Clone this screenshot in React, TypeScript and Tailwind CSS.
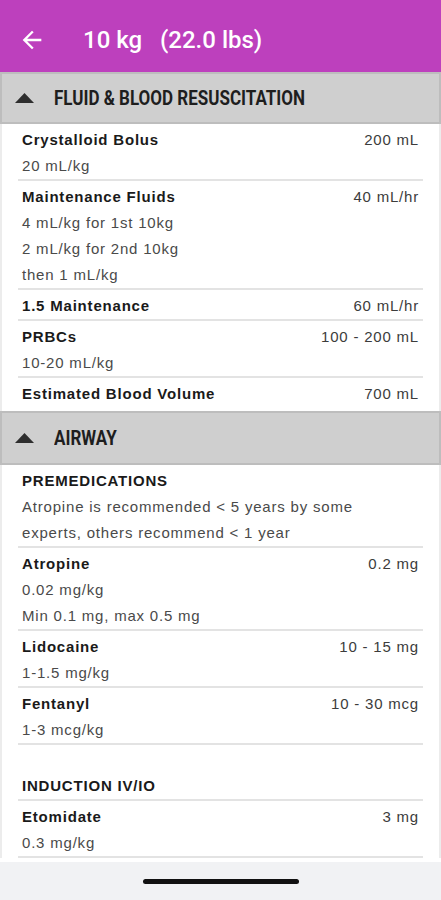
import React from "react";

type Row = { title: string; value?: string; lines?: string[] };

function Section({ title, tall }: { title: string; tall?: boolean }) {
  return (
    <div
      className={`flex ${tall ? "h-[54px]" : "h-[52px]"} items-center border-y-2 border-x-2 border-[#bdbdbd] bg-[#cfcfcf]`}
    >
      <svg width="19" height="10" viewBox="0 0 19 10" className="ml-[13px] shrink-0">
        <polygon points="9.5,0 19,10 0,10" fill="#2e2e2e" />
      </svg>
      <span
        className="ml-[20px] inline-block origin-left scale-x-[0.85] whitespace-nowrap text-[20px] font-bold text-[#1e1e1e]"
        style={{ fontFamily: "Roboto, 'Liberation Sans', sans-serif" }}
      >
        {title}
      </span>
    </div>
  );
}

function Item({ row, last }: { row: Row; last?: boolean }) {
  return (
    <div className={`px-[4px] pt-[3px] ${last ? "pb-[4px]" : "border-b-2 border-[#e3e3e3]"}`}>
      <div className="flex items-center justify-between leading-[26px]">
        <span className="font-bold text-[#1a1a1a]">{row.title}</span>
        {row.value && <span className="text-[#3c3c3c]">{row.value}</span>}
      </div>
      {row.lines?.map((l, i) => (
        <div key={i} className="leading-[26px] text-[#4a4a4a]">
          {l}
        </div>
      ))}
    </div>
  );
}

const fluid: Row[] = [
  { title: "Crystalloid Bolus", value: "200 mL", lines: ["20 mL/kg"] },
  {
    title: "Maintenance Fluids",
    value: "40 mL/hr",
    lines: ["4 mL/kg for 1st 10kg", "2 mL/kg for 2nd 10kg", "then 1 mL/kg"],
  },
  { title: "1.5 Maintenance", value: "60 mL/hr" },
  { title: "PRBCs", value: "100 - 200 mL", lines: ["10-20 mL/kg"] },
  { title: "Estimated Blood Volume", value: "700 mL" },
];

const premed: Row[] = [
  {
    title: "PREMEDICATIONS",
    lines: ["Atropine is recommended < 5 years by some", "experts, others recommend < 1 year"],
  },
  { title: "Atropine", value: "0.2 mg", lines: ["0.02 mg/kg", "Min 0.1 mg, max 0.5 mg"] },
  { title: "Lidocaine", value: "10 - 15 mg", lines: ["1-1.5 mg/kg"] },
  { title: "Fentanyl", value: "10 - 30 mcg", lines: ["1-3 mcg/kg"] },
];

const induction: Row[] = [
  { title: "INDUCTION IV/IO" },
  { title: "Etomidate", value: "3 mg", lines: ["0.3 mg/kg"] },
];

export default function App() {
  return (
    <div
      className="flex h-[900px] w-[441px] flex-col overflow-hidden bg-white"
      style={{ fontFamily: "'Liberation Sans', Arial, sans-serif" }}
    >
      <div className="flex h-[72px] shrink-0 items-center bg-[#bd40bd] pt-[8px]">
        <svg width="28" height="28" viewBox="0 0 24 24" className="ml-[18px] shrink-0">
          <path
            d="M20 11H7.83l5.59-5.59L12 4l-8 8 8 8 1.41-1.41L7.83 13H20v-2z"
            fill="#ffffff"
          />
        </svg>
        <span
          className="ml-[37px] whitespace-pre text-[24px] font-medium text-white"
          style={{ fontFamily: "Roboto, 'Liberation Sans', sans-serif" }}
        >
          {"10 kg   (22.0 lbs)"}
        </span>
      </div>

      <div className="flex-1 overflow-hidden">
        <Section title="FLUID & BLOOD RESUSCITATION" />
        <div className="border-x-2 border-[#ececec] px-[16px] text-[15px] tracking-[0.8px]">
          {fluid.map((r, i) => (
            <Item key={i} row={r} last={i === fluid.length - 1} />
          ))}
        </div>
        <Section title="AIRWAY" tall />
        <div className="border-x-2 border-[#ececec] px-[16px] text-[15px] tracking-[0.8px]">
          {premed.map((r, i) => (
            <Item key={i} row={r} />
          ))}
          <div className="h-[25px]" />
          {induction.map((r, i) => (
            <Item key={i} row={r} />
          ))}
        </div>
      </div>

      <div className="flex h-[38px] shrink-0 items-center justify-center bg-[#f1f2f4]">
        <div className="h-[5px] w-[156px] rounded-full bg-[#111111]" />
      </div>
    </div>
  );
}
